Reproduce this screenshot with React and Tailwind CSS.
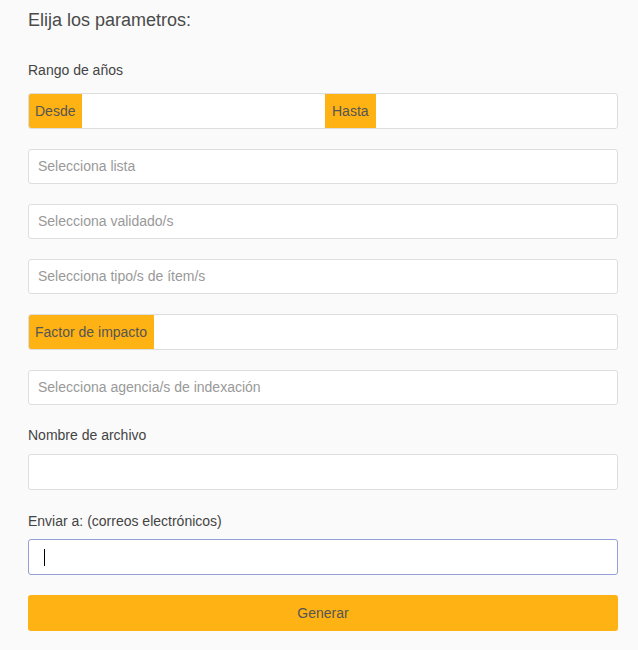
import React from 'react'

const font = { fontFamily: '"Liberation Sans", Arial, sans-serif' }

const Addon = ({ children }) => (
  <span className="flex items-center h-full px-[7px] bg-[#ffb213] text-[#555] text-[14px] whitespace-nowrap">
    {children}
  </span>
)

const Select = ({ placeholder }) => (
  <div className="h-[35px] mt-[20px] flex items-center px-[9px] bg-white border border-[#dedede] rounded-[3px] text-[14px] text-[#999]">
    {placeholder}
  </div>
)

const App = () => {
  return (
    <div className="min-h-screen w-full bg-[#fafafa] px-[28px] pt-[8px] text-[#444]" style={font}>
      <div className="w-[590px]">
        <h2 className="text-[18px] leading-[24px] text-[#4a4a4a]">Elija los parametros:</h2>

        <label className="block mt-[28px] text-[14px] leading-[20px] text-[#444]">Rango de años</label>

        {/* Rango de años: desde / hasta */}
        <div className="mt-[13px] h-[36px] flex bg-white border border-[#dedede] rounded-[3px] overflow-hidden">
          <div className="flex w-[297px] shrink-0 -my-px -ml-px">
            <Addon>Desde</Addon>
            <input className="flex-1 min-w-0 outline-none bg-transparent" />
          </div>
          <div className="flex flex-1 -my-px">
            <Addon>Hasta</Addon>
            <input className="flex-1 min-w-0 outline-none bg-transparent" />
          </div>
        </div>

        <Select placeholder="Selecciona lista" />
        <Select placeholder="Selecciona validado/s" />
        <Select placeholder="Selecciona tipo/s de ítem/s" />

        <div className="mt-[20px] h-[36px] flex bg-white border border-[#dedede] rounded-[3px] overflow-hidden">
          <div className="flex flex-1 -my-px -ml-px">
            <Addon>Factor de impacto</Addon>
            <input className="flex-1 min-w-0 outline-none bg-transparent" />
          </div>
        </div>

        <Select placeholder="Selecciona agencia/s de indexación" />

        <label className="block mt-[20px] text-[14px] leading-[20px] text-[#444]">Nombre de archivo</label>
        <input className="block w-full mt-[9px] h-[36px] px-[10px] bg-white border border-[#dedede] rounded-[3px] outline-none" />

        <label className="block mt-[21px] text-[14px] leading-[20px] text-[#444]">Enviar a: (correos electrónicos)</label>
        <div className="relative mt-[8px] h-[36px] bg-white border border-[#959ed6] rounded-[3px]">
          <span className="absolute left-[15px] top-[9px] w-px h-[17px] bg-black"></span>
        </div>

        <button className="block w-full mt-[20px] h-[36px] bg-[#ffb213] rounded-[3px] text-[14px] text-[#555]">
          Generar
        </button>
      </div>
    </div>
  )
}

export default App
